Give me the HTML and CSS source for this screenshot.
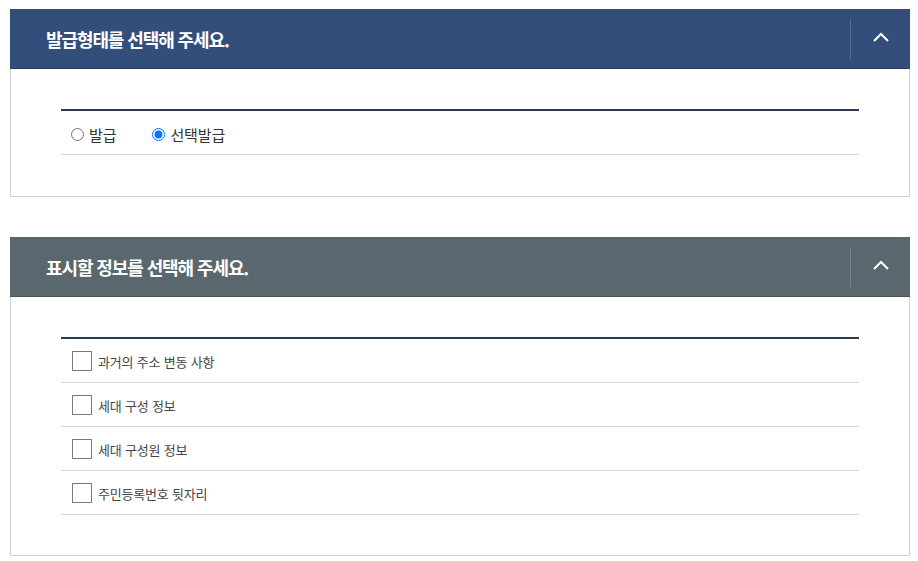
FILE: index.html
```html
<!DOCTYPE html>
<html lang="ko">
<head>
<meta charset="utf-8">
<title>발급형태 선택</title>
<link rel="stylesheet" href="styles.css">
</head>
<body>
<div class="page">
  <section class="panel">
    <div class="panel-head head-blue">
      <h2 class="panel-title">발급형태를 선택해 주세요.</h2>
      <button class="toggle" type="button" aria-label="접기">
        <svg width="16" height="10" viewBox="0 0 16 10"><path d="M1 9 L8 2 L15 9" fill="none" stroke="#fff" stroke-width="2"/></svg>
      </button>
    </div>
    <div class="panel-body">
      <div class="list">
        <div class="row radio-row">
          <label class="radio"><input type="radio" name="type"> 발급</label>
          <label class="radio"><input type="radio" name="type" checked> 선택발급</label>
        </div>
      </div>
    </div>
  </section>

  <section class="panel">
    <div class="panel-head head-gray">
      <h2 class="panel-title">표시할 정보를 선택해 주세요.</h2>
      <button class="toggle" type="button" aria-label="접기">
        <svg width="16" height="10" viewBox="0 0 16 10"><path d="M1 9 L8 2 L15 9" fill="none" stroke="#fff" stroke-width="2"/></svg>
      </button>
    </div>
    <div class="panel-body last">
      <div class="list">
        <label class="row check-row"><input type="checkbox" class="box"><span>과거의 주소 변동 사항</span></label>
        <label class="row check-row"><input type="checkbox" class="box"><span>세대 구성 정보</span></label>
        <label class="row check-row"><input type="checkbox" class="box"><span>세대 구성원 정보</span></label>
        <label class="row check-row"><input type="checkbox" class="box"><span>주민등록번호 뒷자리</span></label>
      </div>
    </div>
  </section>
</div>
</body>
</html>
```
FILE: styles.css
```css
* { box-sizing: border-box; }
html, body { margin: 0; padding: 0; background: #fff; }
body {
  font-family: "Noto Sans CJK KR", "Noto Sans", sans-serif;
  color: #333;
}
.page {
  padding: 9px 8px 0 10px;
  display: flex;
  flex-direction: column;
  gap: 40px;
}
.panel {
  width: 900px;
  border: 1px solid #d2d2d2;
  border-top: none;
}
.panel-head {
  height: 60px;
  display: flex;
  align-items: center;
  justify-content: space-between;
  margin: 0 -1px;
}
.head-blue { background: #344e7b; border-bottom: 1px solid #2b3f63; }
.head-gray { background: #5a676f; border-bottom: 1px solid #4a555c; }
.panel-title {
  margin: 0 0 0 36px;
  font-size: 18px;
  font-weight: 700;
  color: #fff;
  letter-spacing: -1.1px;
}
.toggle {
  width: 60px;
  height: 40px;
  border: none;
  border-left: 1px solid rgba(255,255,255,0.18);
  background: transparent;
  display: flex;
  align-items: center;
  justify-content: center;
  padding: 0 0 3px 0;
  margin-right: 0;
}
.panel-body {
  padding: 40px 50px 41px;
}
.panel-body.last {
  padding-bottom: 40px;
}
.list {
  border-top: 2px solid #2f3b4f;
}
.row {
  height: 44px;
  border-bottom: 1px solid #d4d4d4;
  display: flex;
  align-items: center;
}
.radio-row {
  padding: 4px 0 0 10px;
  gap: 36px;
}
.radio {
  display: flex;
  align-items: center;
  font-size: 15px;
  color: #333;
  letter-spacing: -0.1px;
}
.radio input {
  margin: 0 5px 0 0;
  width: 13px;
  height: 13px;
}
.check-row {
  padding: 1px 0 0 11px;
  font-size: 13px;
  color: #444;
  letter-spacing: -0.2px;
}
.box {
  appearance: none;
  -webkit-appearance: none;
  width: 20px;
  height: 20px;
  margin: 0 6px 0 0;
  border: 1px solid #7a7a7a;
  background: #fff;
}
```
